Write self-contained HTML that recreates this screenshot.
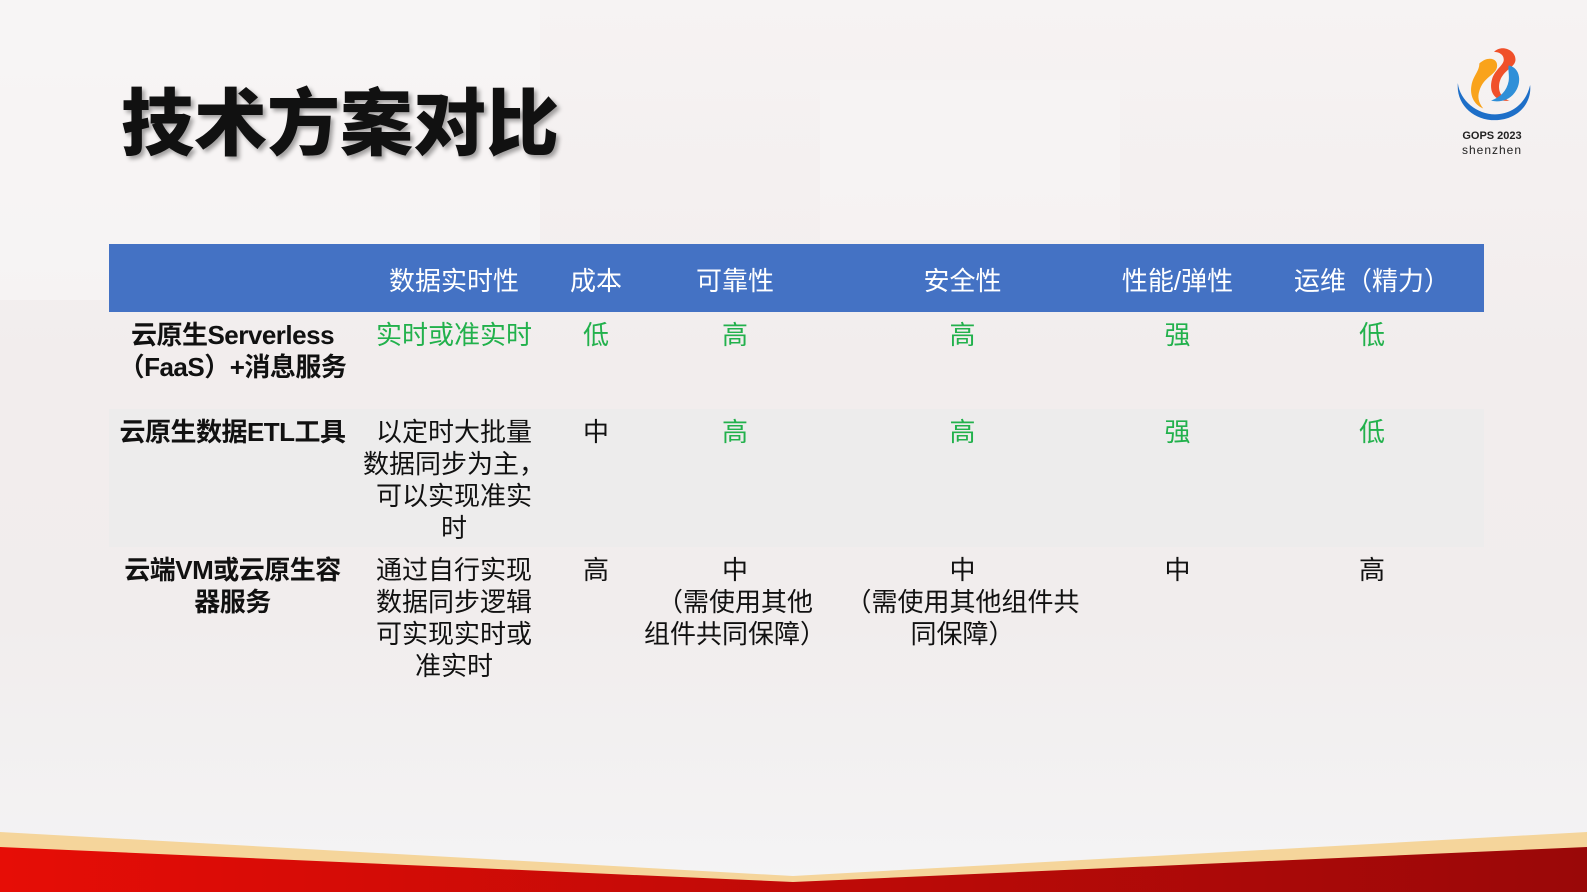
<!DOCTYPE html><html><head><meta charset="utf-8"><style>
body{margin:0;width:1587px;height:892px;overflow:hidden;position:relative;font-family:"Liberation Sans","Noto Sans CJK SC",sans-serif;background:linear-gradient(180deg,#f6f3f3 0%,#f2eded 40%,#f1eded 70%,#f4f4f5 100%);}
.bg1{position:absolute;left:0;top:0;width:540px;height:300px;background:#f8f6f6;opacity:.6}
.bg2{position:absolute;left:820px;top:80px;width:300px;height:160px;background:#f6f4f4;opacity:.7}
h1{position:absolute;left:121px;top:70px;margin:0;font-size:73px;font-weight:900;color:#111;font-family:"Noto Sans CJK SC",sans-serif;text-shadow:3px 3px 4px rgba(0,0,0,.35);line-height:96px}
table{position:absolute;left:109px;top:244px;border-collapse:collapse;table-layout:fixed;width:1375px;font-size:26px;line-height:32px;color:#111;font-family:"Liberation Sans","Noto Sans CJK SC",sans-serif}
td{text-align:center;vertical-align:top;padding:7px 0 0;white-space:nowrap}
tr.h td{background:#4472c4;color:#fff;height:68px;vertical-align:middle;padding:5px 0 0;box-sizing:border-box}
.g{color:#22b14c}
.b{font-weight:bold;letter-spacing:-0.5px}
.bar{position:absolute;left:0;top:0;width:1587px;height:892px}
</style></head><body>
<div class="bg1"></div><div class="bg2"></div>
<h1>技术方案对比</h1>
<svg style="position:absolute;left:1450px;top:44px" width="88" height="84" viewBox="0 0 90 86">
<path d="M45 8c8-8 22-2 22 8 0 8-12 10-16 22-3 10 2 18 10 20-14 2-22-8-18-22 3-10 12-14 12-20 0-6-6-8-10-8z" fill="#f0502a"/>
<path d="M30 20c8-8 20-6 18 4-2 8-14 10-18 24-2 6-1 12 4 18-10-4-14-14-12-24 2-10 8-14 8-22z" fill="#f9a31b"/>
<path d="M60 22c12 2 14 18 6 28-6 8-16 10-24 8 10-4 16-10 18-20 1-6-1-12 0-16z" fill="#2f8fd8"/>
<path d="M8 40c-2 22 16 38 38 38s38-16 36-36c-4 18-18 30-36 30S10 58 8 40z" fill="#1e6fc8"/>
</svg>
<div style="position:absolute;left:1447px;top:129px;width:90px;text-align:center;font-size:11px;font-weight:bold;color:#222;line-height:14px">GOPS 2023<br><span style="font-weight:normal;font-size:12px;letter-spacing:1px">shenzhen</span></div>
<table>
<colgroup><col style="width:247px"><col style="width:196px"><col style="width:88px"><col style="width:190px"><col style="width:265px"><col style="width:165px"><col style="width:224px"></colgroup>
<tr class="h"><td></td><td>数据实时性</td><td>成本</td><td>可靠性</td><td>安全性</td><td>性能/弹性</td><td>运维（精力）</td></tr>
<tr style="height:97px"><td class="b">云原生Serverless<br>（FaaS）+消息服务</td><td class="g">实时或准实时</td><td class="g">低</td><td class="g">高</td><td class="g">高</td><td class="g">强</td><td class="g">低</td></tr>
<tr style="height:138px;background:rgba(236,236,236,.95)"><td class="b">云原生数据ETL工具</td><td>以定时大批量<br>数据同步为主，<br>可以实现准实<br>时</td><td>中</td><td class="g">高</td><td class="g">高</td><td class="g">强</td><td class="g">低</td></tr>
<tr style="height:140px"><td class="b">云端VM或云原生容<br>器服务</td><td>通过自行实现<br>数据同步逻辑<br>可实现实时或<br>准实时</td><td>高</td><td>中<br>（需使用其他<br>组件共同保障）</td><td>中<br>（需使用其他组件共<br>同保障）</td><td>中</td><td>高</td></tr>
</table>
<svg class="bar" viewBox="0 0 1587 892">
<defs><linearGradient id="r" x1="0" x2="1"><stop offset="0" stop-color="#e60d06"/><stop offset="1" stop-color="#9a0808"/></linearGradient></defs>
<polygon points="0,832 793,876 1587,832 1587,892 0,892" fill="#f5d59b"/>
<polygon points="0,847 793,882 1587,847 1587,892 0,892" fill="url(#r)"/>
</svg>
</body></html>
